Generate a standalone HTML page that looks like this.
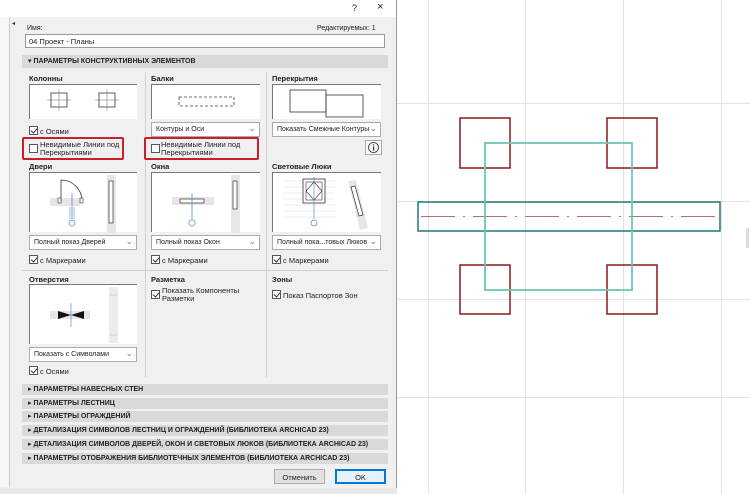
<!DOCTYPE html>
<html><head><meta charset="utf-8"><style>
*{margin:0;padding:0;box-sizing:border-box}
body{width:750px;height:494px;position:relative;overflow:hidden;background:#fff;font-family:"Liberation Sans","DejaVu Sans",sans-serif;font-size:7.5px;color:#222}
.a{position:absolute;white-space:nowrap}
.dlg{position:absolute;left:0;top:0;width:397px;height:488px;background:#f0f0f0;border-right:1px solid #999}
.pv{position:absolute;background:#fff;border-top:1px solid #777;border-left:1px solid #777}
.dd{position:absolute;height:15px;background:#fff;border:1px solid #aaa;padding:3px 4px;font-size:7px;overflow:hidden}
.dd:after{content:"⌄";position:absolute;right:3px;top:0px;color:#777;font-size:9px;background:#fff}
.cb{position:absolute;width:9px;height:9px;border:1px solid #555;background:#fff}
.ck:after{content:"";position:absolute;left:2px;top:0px;width:3px;height:5px;border-right:1px solid #333;border-bottom:1px solid #333;transform:rotate(40deg)}
.h{font-weight:bold;font-size:7.5px}
.sec{position:absolute;left:22px;width:366px;height:11px;background:#d9d9d9;font-size:7px;font-weight:bold;padding:1px 6px;color:#222}
.red{position:absolute;border:2px solid #c8202a;border-radius:2px}
.vl{position:absolute;width:1px;background:#d0d0d0}
</style></head><body>
<svg class="a" style="left:397px;top:0" width="353" height="494">
<g stroke="#e3e3e3" stroke-width="1">
<line x1="31.5" y1="0" x2="31.5" y2="494"/><line x1="128.5" y1="0" x2="128.5" y2="494"/><line x1="226.5" y1="0" x2="226.5" y2="494"/><line x1="324.5" y1="0" x2="324.5" y2="494"/>
<line x1="0" y1="103.5" x2="353" y2="103.5"/><line x1="0" y1="201.5" x2="353" y2="201.5"/><line x1="0" y1="299.5" x2="353" y2="299.5"/><line x1="0" y1="397.5" x2="353" y2="397.5"/>
</g>
<g fill="none" stroke="#8b1a1a" stroke-width="1.5">
<rect x="63" y="118" width="50" height="50"/><rect x="210" y="118" width="50" height="50"/>
<rect x="63" y="265" width="50" height="49"/><rect x="210" y="265" width="50" height="49"/>
</g>
<rect x="21" y="202" width="302" height="29" fill="none" stroke="#1f7a7a" stroke-width="1.5"/>
<line x1="24" y1="216.5" x2="320" y2="216.5" stroke="#a04050" stroke-width="0.8" stroke-dasharray="34,8,2,8"/>
<rect x="88" y="143" width="147" height="147" fill="none" stroke="#6cc4b8" stroke-width="1.8"/>
<rect x="349" y="228" width="3" height="20" fill="#ddd"/>
</svg>
<div class="a" style="left:0;top:488px;width:397px;height:6px;background:#e8e8e8"></div>
<div class="dlg">
<div class="a" style="left:0;top:0;width:396px;height:17px;background:#fff"></div>
<div class="a" style="left:352px;top:3px;font-size:9px">?</div>
<div class="a" style="left:377px;top:1px;font-size:11px">×</div>
<div class="a" style="left:0;top:17px;width:10px;height:470px;background:#f7f7f7;border-right:1px solid #ccc"></div>
<div class="a" style="left:12px;top:20px;font-size:6px">◂</div>
<div class="a" style="left:27px;top:25px;font-size:7px">Имя:</div>
<div class="a" style="left:317px;top:25px;font-size:7px">Редактируемых: 1</div>
<div class="a" style="left:25px;top:34px;width:360px;height:14px;background:#fff;border:1px solid #999;padding:2px 3px;font-size:7.5px">04 Проект - Планы</div>
<div class="sec" style="top:55px;height:13px;padding-top:2px">▾ ПАРАМЕТРЫ КОНСТРУКТИВНЫХ ЭЛЕМЕНТОВ</div>
<div class="vl" style="left:145px;top:72px;height:305px"></div>
<div class="vl" style="left:266px;top:72px;height:305px"></div>
<div class="a" style="left:22px;top:270px;width:366px;height:1px;background:#d0d0d0"></div>
<div class="a h" style="left:29px;top:74px">Колонны</div>
<div class="a h" style="left:151px;top:74px">Балки</div>
<div class="a h" style="left:272px;top:74px">Перекрытия</div>
<div class="pv" style="left:29px;top:84px;width:108px;height:35px"><svg width="108" height="35" stroke="#333" fill="none" stroke-width="0.8"><rect x="21" y="8" width="16" height="14"/><line x1="17" y1="15" x2="41" y2="15" stroke="#666" stroke-width="0.5"/><line x1="29" y1="4" x2="29" y2="26" stroke="#666" stroke-width="0.5"/><rect x="69" y="8" width="16" height="14"/><line x1="65" y1="15" x2="89" y2="15" stroke="#666" stroke-width="0.5"/><line x1="77" y1="4" x2="77" y2="26" stroke="#666" stroke-width="0.5"/></svg></div>
<div class="pv" style="left:151px;top:84px;width:109px;height:35px"><svg width="109" height="35"><rect x="27" y="12" width="55" height="9" fill="none" stroke="#444" stroke-width="0.8" stroke-dasharray="3,2"/></svg></div>
<div class="pv" style="left:272px;top:84px;width:109px;height:35px"><svg width="109" height="35" fill="none" stroke="#333" stroke-width="0.8"><rect x="17" y="5" width="36" height="22"/><rect x="53" y="10" width="37" height="22"/></svg></div>
<div class="cb ck" style="left:29px;top:126px"></div><div class="a" style="left:40px;top:127px">с Осями</div>
<div class="dd" style="left:151px;top:122px;width:109px">Контуры и Оси</div>
<div class="dd" style="left:272px;top:122px;width:109px">Показать Смежные Контуры</div>
<div class="red" style="left:22px;top:137px;width:102px;height:23px"></div>
<div class="cb" style="left:29px;top:144px"></div><div class="a" style="left:40px;top:141px;line-height:8px">Невидимые Линии под<br>Перекрытиями</div>
<div class="red" style="left:144px;top:137px;width:115px;height:23px"></div>
<div class="cb" style="left:151px;top:144px"></div><div class="a" style="left:161px;top:141px;line-height:8px">Невидимые Линии под<br>Перекрытиями</div>
<div class="a" style="left:365px;top:140px;width:17px;height:15px;border:1px solid #aaa;background:#f8f8f8"><svg width="15" height="13"><circle cx="7.5" cy="6.5" r="5" fill="none" stroke="#333" stroke-width="0.8"/><rect x="7" y="5.5" width="1.2" height="4" fill="#333"/><rect x="7" y="3.3" width="1.2" height="1.2" fill="#333"/></svg></div>
<div class="a h" style="left:29px;top:162px">Двери</div>
<div class="a h" style="left:151px;top:162px">Окна</div>
<div class="a h" style="left:272px;top:162px">Световые Люки</div>
<div class="pv" style="left:29px;top:172px;width:108px;height:60px"><svg width="108" height="60"><rect x="20" y="25" width="30" height="8" fill="#e6e6e6"/><rect x="77" y="2" width="9" height="58" fill="#e6e6e6"/><path d="M31 29 V7 A21 21 0 0 1 52 28" fill="none" stroke="#333" stroke-width="0.8"/><rect x="28" y="25" width="3" height="5" fill="#fff" stroke="#333" stroke-width="0.6"/><rect x="50" y="25" width="3" height="5" fill="#fff" stroke="#333" stroke-width="0.6"/><line x1="42" y1="20" x2="42" y2="46" stroke="#5a8fc8" stroke-width="0.8"/><line x1="40" y1="34" x2="40" y2="46" stroke="#5a8fc8" stroke-width="0.6"/><line x1="44" y1="34" x2="44" y2="46" stroke="#5a8fc8" stroke-width="0.6"/><circle cx="42" cy="50" r="3" fill="#fff" stroke="#5a8fc8" stroke-width="0.8"/><rect x="79" y="8" width="4" height="42" fill="#fff" stroke="#333" stroke-width="0.7"/></svg></div>
<div class="pv" style="left:151px;top:172px;width:109px;height:60px"><svg width="109" height="60"><rect x="20" y="24" width="42" height="8" fill="#e6e6e6"/><rect x="79" y="2" width="9" height="58" fill="#e6e6e6"/><rect x="28" y="26" width="24" height="4" fill="#fff" stroke="#333" stroke-width="0.7"/><line x1="40" y1="20" x2="40" y2="46" stroke="#5a8fc8" stroke-width="0.8"/><circle cx="40" cy="50" r="3" fill="#fff" stroke="#5a8fc8" stroke-width="0.8"/><rect x="81" y="8" width="4" height="28" fill="#fff" stroke="#333" stroke-width="0.7"/></svg></div>
<div class="pv" style="left:272px;top:172px;width:109px;height:60px"><svg width="109" height="60"><g stroke="#ddd" stroke-width="0.5"><line x1="10" y1="8" x2="62" y2="8"/><line x1="10" y1="14" x2="62" y2="14"/><line x1="10" y1="20" x2="62" y2="20"/><line x1="10" y1="26" x2="62" y2="26"/><line x1="10" y1="32" x2="62" y2="32"/><line x1="10" y1="38" x2="62" y2="38"/><line x1="10" y1="44" x2="62" y2="44"/></g><rect x="30" y="6" width="22" height="24" fill="#fff" stroke="#333" stroke-width="0.8"/><rect x="33" y="9" width="16" height="18" fill="none" stroke="#333" stroke-width="0.6"/><path d="M41 9 L49 18 L41 27 L33 18 Z" fill="none" stroke="#333" stroke-width="0.6"/><line x1="41" y1="4" x2="41" y2="46" stroke="#5a8fc8" stroke-width="0.7"/><circle cx="41" cy="50" r="3" fill="#fff" stroke="#5a8fc8" stroke-width="0.8"/><path d="M75 8 L83 7 L95 55 L87 57 Z" fill="#e6e6e6"/><path d="M78 14 L82 13 L90 42 L86 43 Z" fill="#fff" stroke="#333" stroke-width="0.7"/></svg></div>
<div class="dd" style="left:29px;top:235px;width:108px">Полный показ Дверей</div>
<div class="dd" style="left:151px;top:235px;width:109px">Полный показ Окон</div>
<div class="dd" style="left:272px;top:235px;width:109px">Полный пока...товых Люков</div>
<div class="cb ck" style="left:29px;top:255px"></div><div class="a" style="left:40px;top:256px">с Маркерами</div>
<div class="cb ck" style="left:151px;top:255px"></div><div class="a" style="left:162px;top:256px">с Маркерами</div>
<div class="cb ck" style="left:272px;top:255px"></div><div class="a" style="left:283px;top:256px">с Маркерами</div>
<div class="a h" style="left:29px;top:275px">Отверстия</div>
<div class="a h" style="left:151px;top:275px">Разметка</div>
<div class="a h" style="left:272px;top:275px">Зоны</div>
<div class="pv" style="left:29px;top:284px;width:108px;height:60px"><svg width="108" height="60"><rect x="20" y="26" width="40" height="8" fill="#e6e6e6"/><rect x="79" y="2" width="9" height="56" fill="#ececec"/><path d="M28 26 L41 30 L54 26 L54 34 L41 30 L28 34 Z" fill="#111"/><line x1="41" y1="18" x2="41" y2="42" stroke="#5a8fc8" stroke-width="0.7"/><line x1="80" y1="10" x2="87" y2="10" stroke="#ccc"/><line x1="80" y1="50" x2="87" y2="50" stroke="#ccc"/></svg></div>
<div class="cb ck" style="left:151px;top:290px"></div><div class="a" style="left:162px;top:287px;line-height:8px">Показать Компоненты<br>Разметки</div>
<div class="cb ck" style="left:272px;top:290px"></div><div class="a" style="left:283px;top:291px">Показ Паспортов Зон</div>
<div class="dd" style="left:29px;top:347px;width:108px">Показать с Символами</div>
<div class="cb ck" style="left:29px;top:366px"></div><div class="a" style="left:40px;top:367px">с Осями</div>
<div class="sec" style="top:384px">▸ ПАРАМЕТРЫ НАВЕСНЫХ СТЕН</div>
<div class="sec" style="top:398px">▸ ПАРАМЕТРЫ ЛЕСТНИЦ</div>
<div class="sec" style="top:411px">▸ ПАРАМЕТРЫ ОГРАЖДЕНИЙ</div>
<div class="sec" style="top:425px">▸ ДЕТАЛИЗАЦИЯ СИМВОЛОВ ЛЕСТНИЦ И ОГРАЖДЕНИЙ (БИБЛИОТЕКА ARCHICAD 23)</div>
<div class="sec" style="top:439px">▸ ДЕТАЛИЗАЦИЯ СИМВОЛОВ ДВЕРЕЙ, ОКОН И СВЕТОВЫХ ЛЮКОВ (БИБЛИОТЕКА ARCHICAD 23)</div>
<div class="sec" style="top:453px">▸ ПАРАМЕТРЫ ОТОБРАЖЕНИЯ БИБЛИОТЕЧНЫХ ЭЛЕМЕНТОВ (БИБЛИОТЕКА ARCHICAD 23)</div>
<div class="a" style="left:274px;top:469px;width:51px;height:15px;background:#e1e1e1;border:1px solid #adadad;text-align:center;padding-top:3px">Отменить</div>
<div class="a" style="left:335px;top:469px;width:51px;height:15px;background:#e5f1fb;border:2px solid #0078d7;text-align:center;padding-top:2px">OK</div>
</div>
</body></html>
